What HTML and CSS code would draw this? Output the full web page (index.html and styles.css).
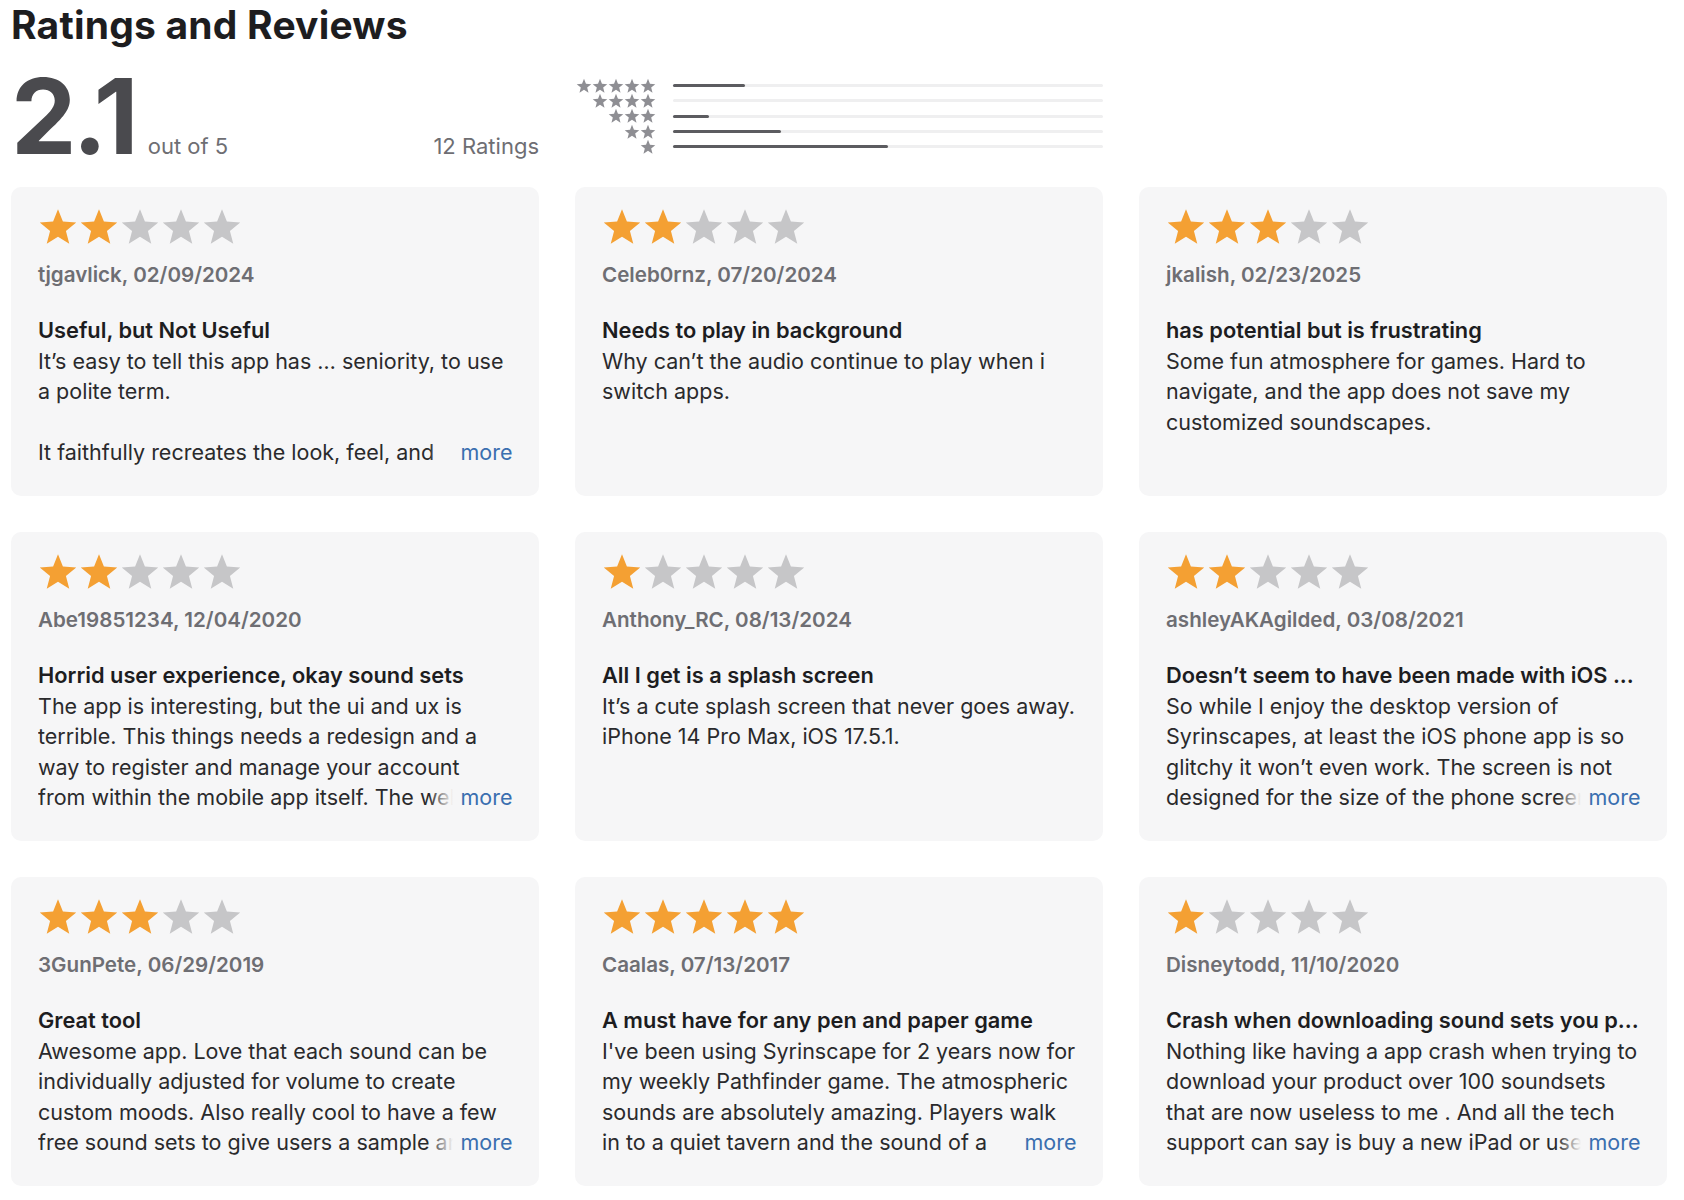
FILE: index.html
```html
<!DOCTYPE html>
<html lang="en">
<head>
    <meta charset="UTF-8">
    <meta name="viewport" content="width=device-width, initial-scale=1.0">
    <title>Ratings and Reviews</title>
    <link rel="stylesheet" href="styles.css">
</head>
<body>
    <svg class="defs" aria-hidden="true">
        <symbol id="star" viewBox="0 0 24 24">
            <polygon points="12,1.3 14.94,8.76 22.94,9.25 16.76,14.35 18.76,22.1 12,17.8 5.24,22.1 7.24,14.35 1.06,9.25 9.06,8.76"/>
        </symbol>
    </svg>

    <main class="page">
        <h1>Ratings and Reviews</h1>

        <section class="summary">
            <div class="score">
                <span class="score-value">2.1</span>
                <span class="score-out">out of 5</span>
                <span class="score-count">12 Ratings</span>
            </div>

            <div class="histogram">
                <div class="hist-row">
                    <div class="hist-stars">
                        <svg><use href="#star"/></svg><svg><use href="#star"/></svg><svg><use href="#star"/></svg><svg><use href="#star"/></svg><svg><use href="#star"/></svg>
                    </div>
                    <div class="hist-bar"><span style="width: 16.7%"></span></div>
                </div>
                <div class="hist-row">
                    <div class="hist-stars">
                        <svg><use href="#star"/></svg><svg><use href="#star"/></svg><svg><use href="#star"/></svg><svg><use href="#star"/></svg>
                    </div>
                    <div class="hist-bar"><span style="width: 0%"></span></div>
                </div>
                <div class="hist-row">
                    <div class="hist-stars">
                        <svg><use href="#star"/></svg><svg><use href="#star"/></svg><svg><use href="#star"/></svg>
                    </div>
                    <div class="hist-bar"><span style="width: 8.3%"></span></div>
                </div>
                <div class="hist-row">
                    <div class="hist-stars">
                        <svg><use href="#star"/></svg><svg><use href="#star"/></svg>
                    </div>
                    <div class="hist-bar"><span style="width: 25%"></span></div>
                </div>
                <div class="hist-row">
                    <div class="hist-stars">
                        <svg><use href="#star"/></svg>
                    </div>
                    <div class="hist-bar"><span style="width: 50%"></span></div>
                </div>
            </div>
        </section>

        <section class="reviews">
            <article class="review">
                <div class="stars">
                    <svg class="on"><use href="#star"/></svg><svg class="on"><use href="#star"/></svg><svg><use href="#star"/></svg><svg><use href="#star"/></svg><svg><use href="#star"/></svg>
                </div>
                <div class="author">tjgavlick, 02/09/2024</div>
                <h3 class="review-title">Useful, but Not Useful</h3>
                <div class="review-body">
                    <p>It’s easy to tell this app has … seniority, to use a polite term.<br><br>It faithfully recreates the look, feel, and behaviour of the desktop app from a decade ago, which is not what you want on a phone.</p>
                    <a class="more" href="#">more</a>
                </div>
            </article>

            <article class="review">
                <div class="stars">
                    <svg class="on"><use href="#star"/></svg><svg class="on"><use href="#star"/></svg><svg><use href="#star"/></svg><svg><use href="#star"/></svg><svg><use href="#star"/></svg>
                </div>
                <div class="author">Celeb0rnz, 07/20/2024</div>
                <h3 class="review-title">Needs to play in background</h3>
                <div class="review-body">
                    <p>Why can’t the audio continue to play when i switch apps.</p>
                </div>
            </article>

            <article class="review">
                <div class="stars">
                    <svg class="on"><use href="#star"/></svg><svg class="on"><use href="#star"/></svg><svg class="on"><use href="#star"/></svg><svg><use href="#star"/></svg><svg><use href="#star"/></svg>
                </div>
                <div class="author">jkalish, 02/23/2025</div>
                <h3 class="review-title">has potential but is frustrating</h3>
                <div class="review-body">
                    <p>Some fun atmosphere for games. Hard to navigate, and the app does not save my customized soundscapes.</p>
                </div>
            </article>

            <article class="review">
                <div class="stars">
                    <svg class="on"><use href="#star"/></svg><svg class="on"><use href="#star"/></svg><svg><use href="#star"/></svg><svg><use href="#star"/></svg><svg><use href="#star"/></svg>
                </div>
                <div class="author">Abe19851234, 12/04/2020</div>
                <h3 class="review-title">Horrid user experience, okay sound sets</h3>
                <div class="review-body">
                    <p>The app is interesting, but the ui and ux is terrible. This things needs a redesign and a way to register and manage your account from within the mobile app itself. The website is the only place to do that right now.</p>
                    <a class="more" href="#">more</a>
                </div>
            </article>

            <article class="review">
                <div class="stars">
                    <svg class="on"><use href="#star"/></svg><svg><use href="#star"/></svg><svg><use href="#star"/></svg><svg><use href="#star"/></svg><svg><use href="#star"/></svg>
                </div>
                <div class="author">Anthony_RC, 08/13/2024</div>
                <h3 class="review-title">All I get is a splash screen</h3>
                <div class="review-body">
                    <p>It’s a cute splash screen that never goes away. iPhone 14 Pro Max, iOS 17.5.1.</p>
                </div>
            </article>

            <article class="review">
                <div class="stars">
                    <svg class="on"><use href="#star"/></svg><svg class="on"><use href="#star"/></svg><svg><use href="#star"/></svg><svg><use href="#star"/></svg><svg><use href="#star"/></svg>
                </div>
                <div class="author">ashleyAKAgilded, 03/08/2021</div>
                <h3 class="review-title">Doesn’t seem to have been made with iOS ...</h3>
                <div class="review-body">
                    <p>So while I enjoy the desktop version of Syrinscapes, at least the iOS phone app is so glitchy it won’t even work. The screen is not designed for the size of the phone screen and half the buttons are cut off.</p>
                    <a class="more" href="#">more</a>
                </div>
            </article>

            <article class="review">
                <div class="stars">
                    <svg class="on"><use href="#star"/></svg><svg class="on"><use href="#star"/></svg><svg class="on"><use href="#star"/></svg><svg><use href="#star"/></svg><svg><use href="#star"/></svg>
                </div>
                <div class="author">3GunPete, 06/29/2019</div>
                <h3 class="review-title">Great tool</h3>
                <div class="review-body">
                    <p>Awesome app. Love that each sound can be individually adjusted for volume to create custom moods. Also really cool to have a few free sound sets to give users a sample and a feel for the app.</p>
                    <a class="more" href="#">more</a>
                </div>
            </article>

            <article class="review">
                <div class="stars">
                    <svg class="on"><use href="#star"/></svg><svg class="on"><use href="#star"/></svg><svg class="on"><use href="#star"/></svg><svg class="on"><use href="#star"/></svg><svg class="on"><use href="#star"/></svg>
                </div>
                <div class="author">Caalas, 07/13/2017</div>
                <h3 class="review-title">A must have for any pen and paper game</h3>
                <div class="review-body">
                    <p>I've been using Syrinscape for 2 years now for my weekly Pathfinder game. The atmospheric sounds are absolutely amazing. Players walk in to a quiet tavern and the sound of a crackling fireplace greets them.</p>
                    <a class="more" href="#">more</a>
                </div>
            </article>

            <article class="review">
                <div class="stars">
                    <svg class="on"><use href="#star"/></svg><svg><use href="#star"/></svg><svg><use href="#star"/></svg><svg><use href="#star"/></svg><svg><use href="#star"/></svg>
                </div>
                <div class="author">Disneytodd, 11/10/2020</div>
                <h3 class="review-title">Crash when downloading sound sets you p...</h3>
                <div class="review-body">
                    <p>Nothing like having a app crash when trying to download your product over 100 soundsets that are now useless to me . And all the tech support can say is buy a new iPad or use another device.</p>
                    <a class="more" href="#">more</a>
                </div>
            </article>
        </section>
    </main>
</body>
</html>
```

FILE: styles.css
```css
body {
    margin: 0;
    padding: 4px 16px 0 11px;
    font-family: Inter, "Helvetica Neue", Arial, sans-serif;
    color: #1d1d1f;
    background-color: #fff;
}
.defs {
    display: none;
}
.page {
    width: 1656px;
}
h1 {
    margin: 0;
    font-size: 39px;
    line-height: 42px;
    font-weight: 700;
    letter-spacing: 0.2px;
}

/* summary */
.summary {
    display: grid;
    grid-template-columns: repeat(3, 528px);
    column-gap: 36px;
    margin-top: 18px;
    height: 104px;
}
.score {
    display: flex;
    align-items: baseline;
}
.score-value {
    font-size: 104px;
    line-height: 104px;
    font-weight: 700;
    color: #4a4a4e;
    letter-spacing: -4px;
}
.score-out,
.score-count {
    font-size: 22px;
    color: #6e6e73;
}
.score-out {
    margin-left: 13px;
}
.score-count {
    margin-left: auto;
}
.histogram {
    padding-top: 14px;
    display: flex;
    flex-direction: column;
}
.hist-row {
    display: flex;
    align-items: center;
    height: 15.3px;
}
.hist-stars {
    width: 81px;
    display: flex;
    justify-content: flex-end;
}
.hist-stars svg {
    width: 16px;
    height: 16px;
    fill: #8e8e93;
}
.hist-bar {
    flex: 1;
    margin-left: 17px;
    height: 3px;
    border-radius: 2px;
    background-color: #efeff0;
}
.hist-bar span {
    display: block;
    height: 100%;
    border-radius: 2px;
    background-color: #5c5c60;
}

/* review cards */
.reviews {
    display: grid;
    grid-template-columns: repeat(3, 528px);
    gap: 36px;
    margin-top: 19px;
}
.review {
    background-color: #f6f6f7;
    border-radius: 10px;
    padding: 20px 26.5px 28px 27px;
    height: 309px;
    box-sizing: border-box;
}
.stars {
    display: flex;
    gap: 1px;
}
.stars svg {
    width: 40px;
    height: 40px;
    fill: #c6c6c8;
}
.stars svg.on {
    fill: #f4a033;
}
.author {
    margin-top: 13px;
    font-size: 20.6px;
    line-height: 30px;
    font-weight: 600;
    color: #6e6e73;
}
.review-title {
    margin: 25px 0 0;
    font-size: 21.8px;
    line-height: 30.5px;
    font-weight: 600;
    white-space: nowrap;
    overflow: hidden;
    text-overflow: ellipsis;
}
.review-body {
    position: relative;
    max-height: 122px;
    overflow: hidden;
    font-size: 21.5px;
    line-height: 30.5px;
    color: #2a2a2c;
}
.review-body p {
    margin: 0;
}
.more {
    position: absolute;
    right: 0;
    bottom: 0;
    padding-left: 32px;
    color: #3a6fb0;
    text-decoration: none;
    background: linear-gradient(to right, rgba(246, 246, 247, 0), #f6f6f7 24px);
}
```
